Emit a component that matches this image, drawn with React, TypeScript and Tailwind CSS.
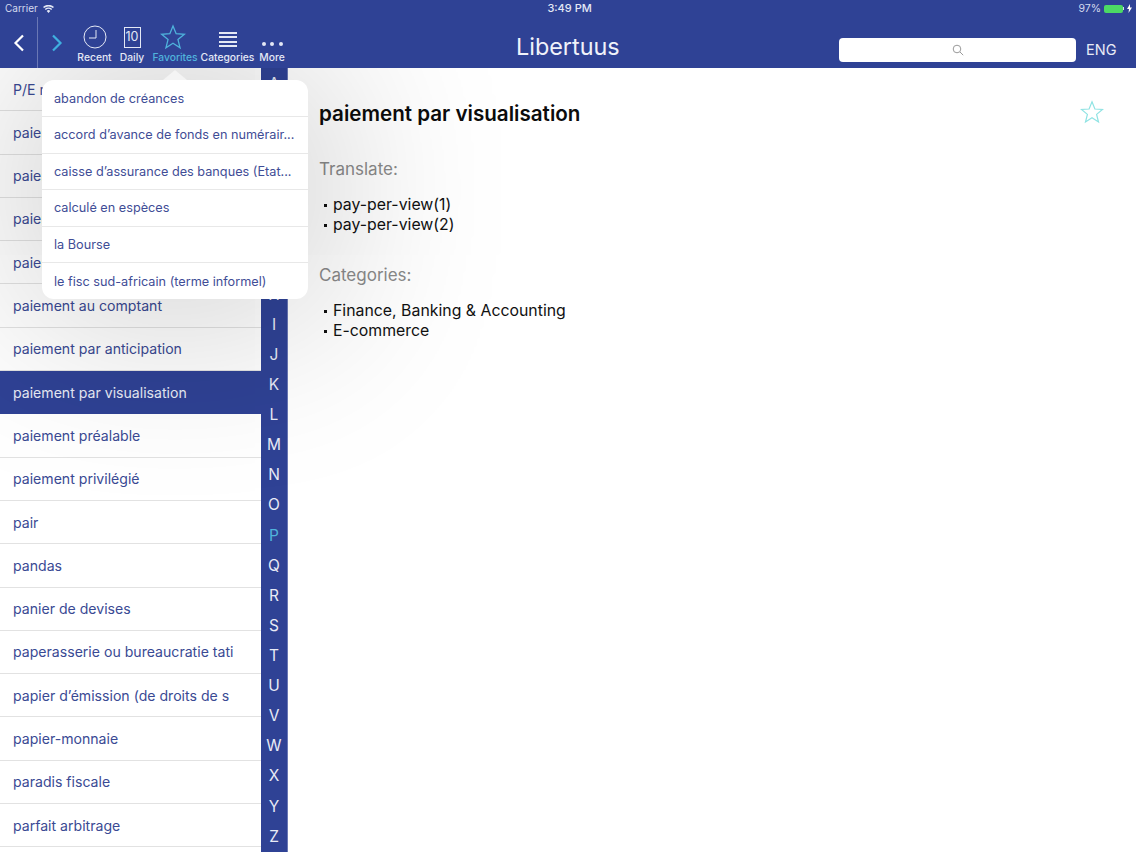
import React from "react";

const rows = ["P/E ratio","paiement","paiement","paiement","paiement","paiement au comptant","paiement par anticipation","paiement par visualisation","paiement préalable","paiement privilégié","pair","pandas","panier de devises","paperasserie ou bureaucratie tati","papier d’émission (de droits de s","papier-monnaie","paradis fiscale","parfait arbitrage"];
const letters = "ABCDEFGHIJKLMNOPQRSTUVWXYZ".split("");
const pop = ["abandon de créances","accord d’avance de fonds en numérair...","caisse d’assurance des banques (Etat...","calculé en espèces","la Bourse","le fisc sud-africain (terme informel)"];

function Star({ size, color, sw = 1.2 }: { size: number; color: string; sw?: number }) {
  return (
    <svg width={size} height={size} viewBox="0 0 24 24" fill="none" stroke={color} strokeWidth={sw} strokeLinejoin="miter">
      <path d="M12 1.800l2.900 7.200 7.600.5-5.900 4.900 1.900 7.600L12 17.800 5.500 22l1.900-7.600L1.500 9.500l7.600-.5z" />
    </svg>
  );
}

function Tool({ label, active, children, w }: { label: string; active?: boolean; children: React.ReactNode; w: string }) {
  return (
    <div className={`flex flex-col items-center shrink-0 ${w}`}>
      <div className="h-[29px] flex items-center justify-center">{children}</div>
      <span className={`text-[10.300px] leading-[12px] -mt-[0.500px] font-medium whitespace-nowrap ${active ? "text-[#4fb3dc]" : "text-[#e4e8f5]"}`}>{label}</span>
    </div>
  );
}

function Bullet({ children }: { children: React.ReactNode }) {
  return (
    <li className="flex items-center">
      <span className="ml-[5px] mr-[6px] w-[3px] h-[3px] bg-[#111] shrink-0" />
      <span>{children}</span>
    </li>
  );
}

export default function App() {
  return (
    <div className="relative w-[1136px] h-[852px] overflow-hidden bg-white font-['Inter','Liberation_Sans',sans-serif]">
      <header className="relative z-20 h-[68px] bg-[#2f4295] text-white flex flex-col">
        <div className="h-[17px] flex items-center justify-between pl-[5px] pr-[4px] text-[10px] text-[#d5daee]">
          <div className="flex items-center gap-[5px]">
            <span>Carrier</span>
            <svg width="11" height="8" viewBox="0 0 11 8" fill="#e4e8f5"><path d="M5.500 8L3.700 5.900a2.600 2.600 0 0 1 3.600 0zM2.800 5L1.800 3.900a5.400 5.400 0 0 1 7.400 0L8.200 5a4 4 0 0 0-5.400 0zM1.100 3.100L0 2a8 8 0 0 1 11 0L9.900 3.100a6.500 6.500 0 0 0-8.800 0z" /></svg>
          </div>
          <span className="font-medium text-[11px] text-[#e4e8f5] ml-[7px]">3:49 PM</span>
          <div className="flex items-center gap-[3px]">
            <span className="text-[10.500px]">97%</span>
            <div className="w-[19px] h-[8px] rounded-[2px] bg-[#4cd964]" />
            <div className="w-[1px] h-[3px] bg-[#d5daee] -ml-[3px]" />
            <svg width="5" height="9" viewBox="0 0 5 9" fill="#fff"><path d="M3 0L0 5h2l-.5 4L5 3.500H3z" /></svg>
          </div>
        </div>
        <div className="relative flex-1 flex items-start">
          <div className="w-[38px] h-[51px] border-r border-[#6a78b5] flex items-center justify-center shrink-0">
            <svg width="12" height="18" viewBox="0 0 12 18" fill="none" stroke="#fff" strokeWidth="2.200"><path d="M10 1.500L2.500 9l7.500 7.500" /></svg>
          </div>
          <div className="w-[37px] h-[51px] flex items-center justify-center shrink-0">
            <svg width="12" height="18" viewBox="0 0 12 18" fill="none" stroke="#3fb0e0" strokeWidth="2.200"><path d="M2 1.500L9.500 9 2 16.500" /></svg>
          </div>
          <div className="flex items-start pt-[5.500px] -ml-[1px]">
            <Tool label="Recent" w="w-[41px]">
              <svg width="24" height="24" viewBox="0 0 24 24" fill="none" stroke="#e4e8f5" strokeWidth="1"><circle cx="12" cy="12" r="11" /><path d="M13 5v8H6" /></svg>
            </Tool>
            <Tool label="Daily" w="w-[34px]">
              <div className="w-[17px] h-[21px] border border-[#e4e8f5] flex items-center justify-center text-[12.500px] text-[#e4e8f5]">10</div>
            </Tool>
            <Tool label="Favorites" active w="w-[45px] ml-[3.500px]">
              <div className="-ml-[4px]"><Star size={26} color="#4fb3dc" /></div>
            </Tool>
            <Tool label="Categories" w="w-[54px] ml-[3px]">
              <div className="w-[18px] flex flex-col gap-[2.500px] pt-[5px]">
                <div className="h-[2px] bg-[#e4e8f5]" /><div className="h-[2px] bg-[#e4e8f5]" /><div className="h-[2px] bg-[#e4e8f5]" /><div className="h-[2px] bg-[#e4e8f5]" />
              </div>
            </Tool>
            <Tool label="More" w="w-[30px] ml-[2.500px]">
              <div className="flex gap-[4.500px] pt-[14px]">
                <div className="w-[4px] h-[4px] rounded-full bg-[#e4e8f5]" /><div className="w-[4px] h-[4px] rounded-full bg-[#e4e8f5]" /><div className="w-[4px] h-[4px] rounded-full bg-[#e4e8f5]" />
              </div>
            </Tool>
          </div>
          <div className="absolute left-[516px] top-[15px] text-[23.400px] leading-[30px] text-[#f0f2fa]">Libertuus</div>
          <div className="absolute left-[839px] top-[20.500px] w-[237px] h-[24px] bg-white rounded-[4px] flex items-center justify-center">
            <svg width="12" height="12" viewBox="0 0 12 12" fill="none" stroke="#9a9a9a" strokeWidth="1"><circle cx="5" cy="5" r="3.800" /><path d="M8 8l3.200 3.200" /></svg>
          </div>
          <div className="absolute left-[1086px] top-[24px] text-[14.500px] leading-[18px] text-[#e8ebf6]">ENG</div>
        </div>
      </header>

      <div className="relative flex h-[784px]">
        <div className="w-[261px] shrink-0">
          {rows.map((r, i) =>
            i === 7 ? (
              <div key={i} className="h-[43.300px] bg-[#2f4295] text-[#e8ebf6] text-[14.100px] flex items-center pl-[13px] whitespace-nowrap">{r}</div>
            ) : (
              <div key={i} className="h-[43.300px] border-b border-[#e2e2e2] text-[#3a4a94] text-[14.100px] flex items-center pl-[13px] whitespace-nowrap overflow-hidden">{r}</div>
            )
          )}
        </div>
        <div className="w-[27px] shrink-0 bg-[#2f4295] border-r border-[#6a78b5]">
          {letters.map((l) => (
            <div key={l} className={`h-[30.120px] flex items-center justify-center text-[15.500px] pt-[1px] ${l === "P" ? "text-[#4fb3dc]" : "text-[#e8ebf6]"}`}>{l}</div>
          ))}
        </div>
        <main className="flex-1 pl-[31px] pr-[32px] pt-[33px] relative">
          <div className="flex items-start justify-between">
            <h1 className="text-[20.600px] leading-[26px] font-semibold text-[#0c0c0c]">paiement par visualisation</h1>
            <div className="mr-[0px] -mt-[1px]"><Star size={24} color="#8fe3e3" sw={1.2} /></div>
          </div>
          <h2 className="mt-[31px] text-[17px] leading-[22px] text-[#8a8a8a]">Translate:</h2>
          <ul className="mt-[15px] text-[15.850px] leading-[20px] text-[#111]">
            <Bullet>pay-per-view(1)</Bullet>
            <Bullet>pay-per-view(2)</Bullet>
          </ul>
          <h2 className="mt-[29px] text-[17px] leading-[22px] text-[#8a8a8a]">Categories:</h2>
          <ul className="mt-[15px] text-[15.850px] leading-[20px] text-[#111]">
            <Bullet>Finance, Banking &amp; Accounting</Bullet>
            <Bullet>E-commerce</Bullet>
          </ul>
        </main>
      </div>

      <div className="absolute z-10 left-[42px] top-[80px] w-[266px] h-[219px] pt-[0.500px] bg-white rounded-[12px] shadow-[0_0_180px_25px_rgba(0,0,0,0.18)]">
        <div className="absolute left-[121px] -top-[10px] w-0 h-0 border-l-[12px] border-r-[12px] border-b-[10px] border-l-transparent border-r-transparent border-b-[#f4f4f4]" />
        {pop.map((p, i) => (
          <div key={i} className={`h-[36.500px] flex items-center pl-[12px] text-[12.700px] text-[#3f4d96] whitespace-nowrap ${i < 5 ? "border-b border-[#e8e8e8]" : ""}`}>{p}</div>
        ))}
      </div>
    </div>
  );
}
